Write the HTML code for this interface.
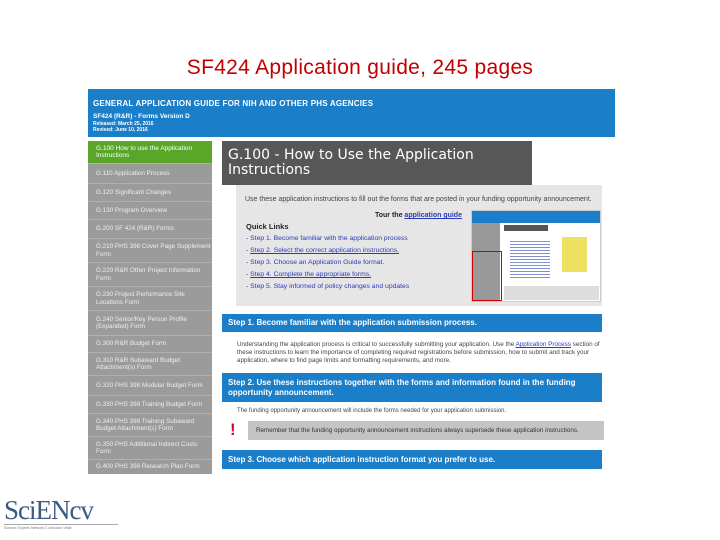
<!DOCTYPE html>
<html><head><meta charset="utf-8"><style>
*{margin:0;padding:0;box-sizing:border-box}
body{width:720px;height:540px;background:#fff;position:relative;overflow:hidden;font-family:"Liberation Sans",sans-serif}
.a{position:absolute}
.title{left:0;width:720px;top:56px;text-align:center;font-size:21px;color:#c00000;letter-spacing:.3px}
.hdr{left:88px;top:89px;width:527px;height:48px;background:#1a7ec8;color:#fff;padding:10px 0 0 5px}
.side{left:88px;top:141px;width:124px;height:333px;background:#9b9b9b}
.si{position:absolute;left:0;width:124px;color:#eee;font-size:6.3px;line-height:7.5px;padding-left:8px;border-bottom:1px solid #b0b0b0;display:flex;align-items:center}
.bar{background:#1a7ec8;color:#fff;font-weight:bold;font-size:8px;padding-left:6px;left:222px;width:380px}
.p{font-size:6.3px;color:#444;line-height:7.8px}
.lk{color:#2b3ab8;font-size:6.8px;line-height:12px}
</style></head><body>
<div class="a title">SF424 Application guide, 245 pages</div>
<div class="a hdr">
<div style="font-size:8px;font-weight:bold;letter-spacing:.2px">GENERAL APPLICATION GUIDE FOR NIH AND OTHER PHS AGENCIES</div>
<div style="font-size:6.5px;margin-top:5px;font-weight:bold">SF424 (R&amp;R) - Forms Version D</div>
<div style="font-size:5px;margin-top:1px;font-weight:bold;line-height:6px">Released: March 25, 2016<br>Revised: June 10, 2016</div>
</div>
<div class="a side">
<div class="si" style="top:0;height:23px;background:#5aa629;color:#fff;font-size:6.5px">G.100 How to use the Application Instructions</div>
<div class="si" style="top:23px;height:20px">G.110 Application Process</div>
<div class="si" style="top:43px;height:18px">G.120 Significant Changes</div>
<div class="si" style="top:61px;height:18px">G.130 Program Overview</div>
<div class="si" style="top:79px;height:19px">G.200 SF 424 (R&amp;R) Forms</div>
<div class="si" style="top:98px;height:24px">G.210 PHS 398 Cover Page Supplement Form</div>
<div class="si" style="top:122px;height:24px">G.220 R&amp;R Other Project Information Form</div>
<div class="si" style="top:146px;height:24px">G.230 Project Performance Site Locations Form</div>
<div class="si" style="top:170px;height:25px">G.240 Senior/Key Person Profile (Expanded) Form</div>
<div class="si" style="top:195px;height:17px">G.300 R&amp;R Budget Form</div>
<div class="si" style="top:212px;height:23px">G.310 R&amp;R Subaward Budget Attachment(s) Form</div>
<div class="si" style="top:235px;height:20px">G.320 PHS 398 Modular Budget Form</div>
<div class="si" style="top:255px;height:18px">G.330 PHS 398 Training Budget Form</div>
<div class="si" style="top:273px;height:23px">G.340 PHS 398 Training Subaward Budget Attachment(s) Form</div>
<div class="si" style="top:296px;height:23px">G.350 PHS Additional Indirect Costs Form</div>
<div class="si" style="top:319px;height:14px;border:none">G.400 PHS 398 Research Plan Form</div>
</div>
<div class="a" style="left:222px;top:141px;width:310px;height:44px;background:#575757;color:#fff;font-family:'DejaVu Sans',sans-serif;font-size:14px;line-height:15px;padding:7px 40px 0 6px">G.100 - How to Use the Application Instructions</div>
<div class="a" style="left:236px;top:185px;width:366px;height:121px;background:#e6e6e6"></div>
<div class="a p" style="left:245px;top:196px;font-size:7px;white-space:nowrap">Use these application instructions to fill out the forms that are posted in your funding opportunity announcement.</div>
<div class="a" style="left:375px;top:212px;font-size:7px;font-weight:bold;color:#222">Tour the <span style="color:#2b3ab8;text-decoration:underline">application guide</span></div>
<div class="a" style="left:246px;top:222px;font-size:7.5px;font-weight:bold;color:#222">Quick Links</div>
<div class="a lk" style="left:246px;top:233px">- Step 1. Become familiar with the application process<br>- <u>Step 2. Select the correct application instructions.</u><br>- Step 3. Choose an Application Guide format.<br>- <u>Step 4. Complete the appropriate forms.</u><br>- Step 5. Stay informed of policy changes and updates</div>
<div class="a" style="left:471px;top:210px;width:130px;height:92px;background:#fff;border:1px solid #ccc">
<div class="a" style="left:0;top:0;width:128px;height:12px;background:#1a7ec8"></div>
<div class="a" style="left:0;top:12px;width:28px;height:78px;background:#999"></div>
<div class="a" style="left:0;top:40px;width:30px;height:50px;border:1px solid #c00"></div>
<div class="a" style="left:32px;top:14px;width:44px;height:6px;background:#555"></div>
<div class="a" style="left:90px;top:26px;width:25px;height:35px;background:#eee060"></div>
<div class="a" style="left:38px;top:28px;width:40px;height:40px;background:repeating-linear-gradient(#fff 0 2px,#8090d0 2px 3px)"></div>
<div class="a" style="left:32px;top:75px;width:95px;height:14px;background:#ddd"></div>
</div>
<div class="a bar" style="top:314px;height:18px;line-height:18px">Step 1. Become familiar with the application submission process.</div>
<div class="a p" style="left:237px;top:341px;width:370px">Understanding the application process is critical to successfully submitting your application. Use the <u style="color:#2b3ab8">Application Process</u> section of these instructions to learn the importance of completing required registrations before submission, how to submit and track your application, where to find page limits and formatting requirements, and more.</div>
<div class="a bar" style="top:373px;height:29px;line-height:10px;padding-top:5px">Step 2. Use these instructions together with the forms and information found in the funding opportunity announcement.</div>
<div class="a p" style="left:237px;top:408px;font-size:6px">The funding opportunity announcement will include the forms needed for your application submission.</div>
<div class="a" style="left:230px;top:420px;color:#c8102e;font-weight:bold;font-size:17px;line-height:20px">!</div>
<div class="a p" style="left:248px;top:421px;width:356px;height:19px;background:#c4c4c4;padding:6px 0 0 8px;color:#333">Remember that the funding opportunity announcement instructions always supersede these application instructions.</div>
<div class="a bar" style="top:450px;height:19px;line-height:19px">Step 3. Choose which application instruction format you prefer to use.</div>
<div class="a" style="left:4px;top:497px;font-family:'Liberation Serif',serif;font-size:27px;color:#3c5a85;letter-spacing:-1px;line-height:26px">SciENcv</div>
<div class="a" style="left:4px;top:524px;width:114px;border-top:1px solid #aaa;font-size:3.6px;color:#777;padding-top:1px">Science Experts Network Curriculum Vitae</div>
</body></html>
